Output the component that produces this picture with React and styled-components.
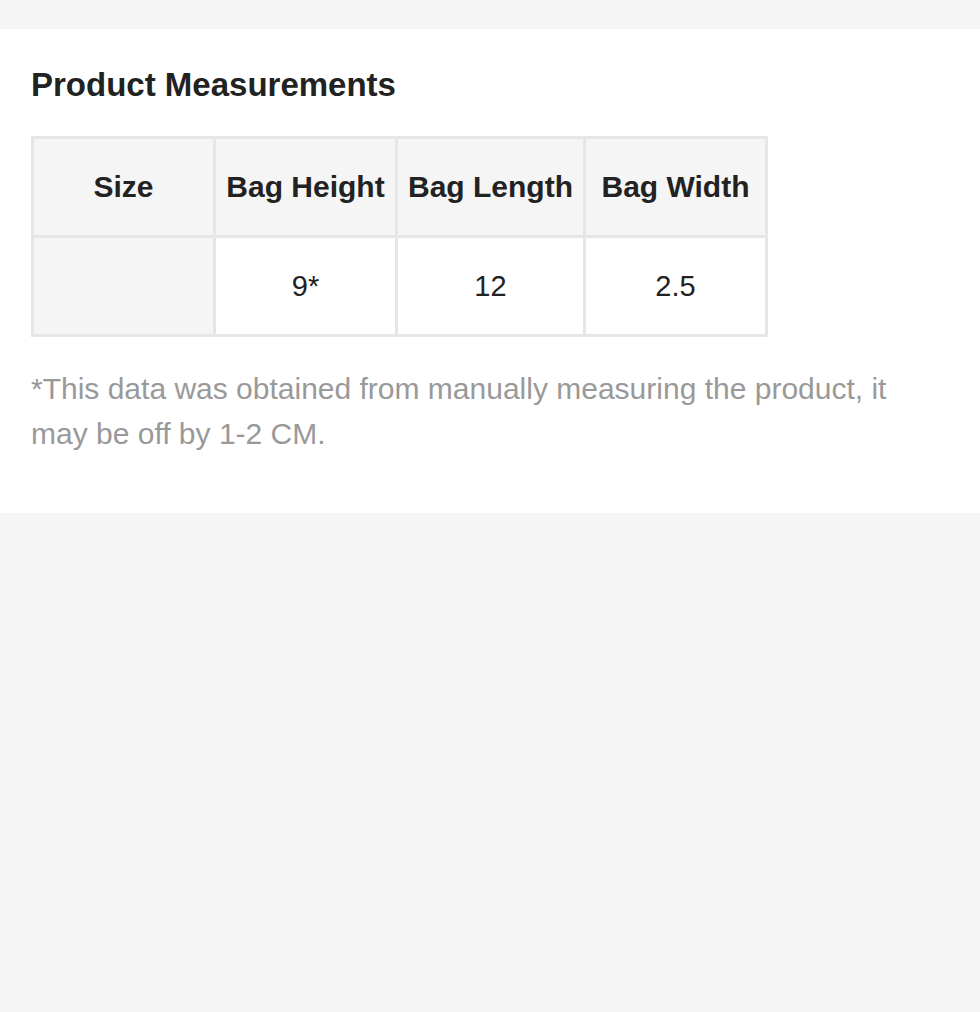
import styled, { createGlobalStyle } from "styled-components";

const GlobalStyle = createGlobalStyle`
    html, body {
        margin: 0;
        padding: 0;
        background-color: #f5f5f5;
        font-family: 'Liberation Sans', Arial, sans-serif;
    }
`

const Page = styled.div`
    min-height: 1012px;
    padding-top: 29px;
    background-color: #f5f5f5;
`
const Panel = styled.section`
    background-color: #ffffff;
    padding: 37px 31px 57px 31px;
`
const Title = styled.h2`
    margin: 0 0 32px 0;
    font-size: 33px;
    line-height: 38px;
    font-weight: bold;
    color: #222222;
`
const Table = styled.table`
    border-collapse: collapse;
    border: 3px solid #e6e6e6;
`
const HeadCell = styled.th`
    min-width: 159px;
    height: 96px;
    padding: 0 10px;
    border: 3px solid #e6e6e6;
    background-color: #f5f5f5;
    color: #222222;
    font-size: 30px;
    font-weight: bold;
    text-align: center;
    vertical-align: middle;
    white-space: nowrap;
`
const Cell = styled.td`
    min-width: 159px;
    height: 96px;
    padding: 0 10px;
    border: 3px solid #e6e6e6;
    background-color: ${({ $muted }) => $muted ? '#f5f5f5' : '#ffffff'};
    color: #222222;
    font-size: 29px;
    text-align: center;
    vertical-align: middle;
`
const Note = styled.p`
    margin: 29px 0 0 0;
    font-size: 30px;
    line-height: 45px;
    color: #999999;
`

const columns = ['Size', 'Bag Height', 'Bag Length', 'Bag Width']
const values = ['', '9*', '12', '2.5']

const App = () => {
    return (
        <>
            <GlobalStyle />
            <Page>
                <Panel>
                    <Title>Product Measurements</Title>
                    <Table>
                        <thead>
                            <tr>
                                {columns.map((col) => (
                                    <HeadCell key={col}>{col}</HeadCell>
                                ))}
                            </tr>
                        </thead>
                        <tbody>
                            <tr>
                                {values.map((value, index) => (
                                    <Cell key={index} $muted={index === 0}>{value}</Cell>
                                ))}
                            </tr>
                        </tbody>
                    </Table>
                    <Note>*This data was obtained from manually measuring the product, it may be off by 1-2 CM.</Note>
                </Panel>
            </Page>
        </>
    )
}

export default App;
